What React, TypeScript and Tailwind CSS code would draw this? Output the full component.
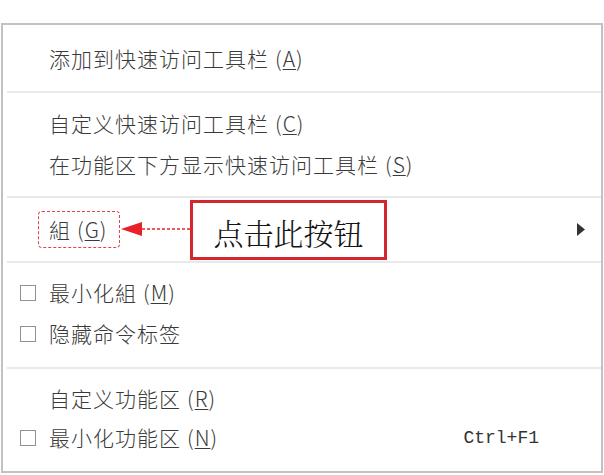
import React from "react";

const cjk = { fontFamily: '"Noto Sans CJK SC", "Noto Sans", sans-serif' };

function Key({ k }: { k: string }) {
  return (
    <span className="ml-[6px]">
      (<span className="underline underline-offset-[2px] decoration-1">{k}</span>)
    </span>
  );
}

function Check() {
  return (
    <span className="ml-[17px] block w-[16px] h-[16px] border-[1.5px] border-[#929292] bg-white" />
  );
}

function Row({
  h,
  check,
  children,
  right,
}: {
  h: string;
  check?: boolean;
  children: React.ReactNode;
  right?: React.ReactNode;
}) {
  return (
    <div className={`flex items-center ${h}`}>
      <div className="w-[46px] shrink-0 flex items-center">{check && <Check />}</div>
      <div className="tracking-[1px]">{children}</div>
      {right}
    </div>
  );
}

function Sep() {
  return <div className="h-[2px] ml-[4px] bg-[#e9e9e9]" />;
}

export default function App() {
  return (
    <div className="w-[604px] h-[475px] bg-white pt-[23px] pl-[1px]" style={cjk}>
      <div className="w-[602px] h-[450px] border-2 border-[#c2c2c2] flex flex-col text-[21px] font-light text-[#3a3a3a] leading-none">
        <Row h="h-[66px]">
          添加到快速访问工具栏<Key k="A" />
        </Row>
        <Sep />
        <div className="h-[103px] pt-[10px] flex flex-col">
          <Row h="h-[41px]">
            自定义快速访问工具栏<Key k="C" />
          </Row>
          <Row h="h-[41px]">
            在功能区下方显示快速访问工具栏<Key k="S" />
          </Row>
        </div>
        <Sep />
        <div className="relative h-[63px] flex items-center">
          <span className="ml-[35px] inline-flex items-center h-[37px] pl-[10px] pr-[12px] border-[1.5px] border-dashed border-[#e4424a] rounded-[4px] tracking-[1px]">
            組<Key k="G" />
          </span>
          <svg
            className="absolute left-[118px] top-[23px]"
            width="70"
            height="16"
            viewBox="0 0 70 16"
          >
            <polygon points="0,8 21,1 21,15" fill="#e8202a" />
            <line x1="21" y1="8" x2="70" y2="8" stroke="#e8202a" strokeWidth="1.5" strokeDasharray="3 2" />
          </svg>
          <div className="absolute left-[187px] top-[2px] w-[197px] h-[60px] border-[3px] border-[#d3262d] bg-white flex items-center justify-center">
            <span
              className="text-[30px] text-[#161616] font-light tracking-[0px] pt-[4px]"
              style={{ fontFamily: '"Noto Serif CJK SC", "AR PL UMing CN", "Noto Sans CJK SC", serif' }}
            >
              点击此按钮
            </span>
          </div>
          <svg className="ml-auto mr-[16px]" width="8" height="13" viewBox="0 0 8 13">
            <polygon points="0,0 8,6.5 0,13" fill="#333" />
          </svg>
        </div>
        <Sep />
        <div className="h-[104px] pt-[9px] flex flex-col">
          <Row h="h-[41px]" check>
            最小化組<Key k="M" />
          </Row>
          <Row h="h-[41px]" check>
            隐藏命令标签
          </Row>
        </div>
        <Sep />
        <div className="h-[102px] pt-[10px] flex flex-col">
          <Row h="h-[39px]">
            自定义功能区<Key k="R" />
          </Row>
          <Row
            h="h-[39px]"
            check
            right={
              <span
                className="ml-auto mr-[62px] text-[18px] text-[#333] font-normal tracking-normal"
                style={{ fontFamily: '"Liberation Mono", "Courier New", monospace' }}
              >
                Ctrl+F1
              </span>
            }
          >
            最小化功能区<Key k="N" />
          </Row>
        </div>
      </div>
    </div>
  );
}
